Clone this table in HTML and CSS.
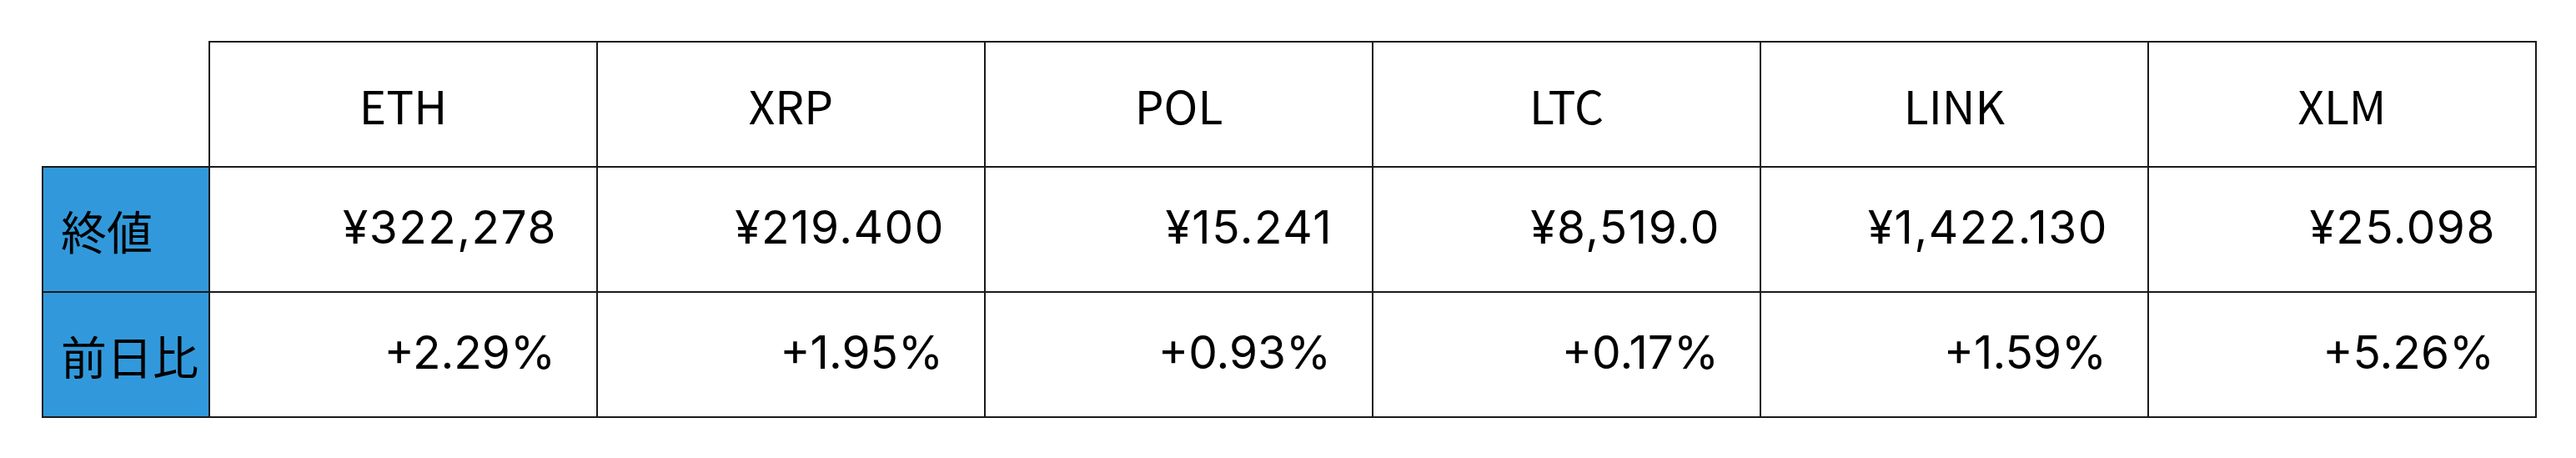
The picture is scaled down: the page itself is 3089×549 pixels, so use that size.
FILE: index.html
```html
<!DOCTYPE html>
<html lang="ja">
<head>
<meta charset="utf-8">
<title>終値</title>
<link rel="stylesheet" href="styles.css">
</head>
<body>
<table class="prices">
  <thead>
    <tr>
      <th class="corner"></th>
      <th class="coin">ETH</th>
      <th class="coin">XRP</th>
      <th class="coin">POL</th>
      <th class="coin">LTC</th>
      <th class="coin">LINK</th>
      <th class="coin">XLM</th>
    </tr>
  </thead>
  <tbody>
    <tr class="close-row">
      <th class="label">終値</th>
      <td class="val">¥322,278</td>
      <td class="val">¥219.400</td>
      <td class="val">¥15.241</td>
      <td class="val">¥8,519.0</td>
      <td class="val">¥1,422.130</td>
      <td class="val">¥25.098</td>
    </tr>
    <tr>
      <th class="label">前日比</th>
      <td class="val">+2.29%</td>
      <td class="val">+1.95%</td>
      <td class="val">+0.93%</td>
      <td class="val">+0.17%</td>
      <td class="val">+1.59%</td>
      <td class="val">+5.26%</td>
    </tr>
  </tbody>
</table>
</body>
</html>
```
FILE: styles.css
```css
html, body {
  margin: 0;
  padding: 0;
  background: #ffffff;
}

body {
  padding: 49px 0 0 50px;
  font-family: "Noto Sans CJK JP", "Noto Sans", sans-serif;
  color: #000000;
}

.prices {
  border-collapse: collapse;
  table-layout: fixed;
  font-size: 55px;
  font-weight: 400;
}

.prices th,
.prices td {
  border: 2px solid #1a1a1a;
  height: 150px;
  padding: 0;
  box-sizing: border-box;
  font-weight: 400;
  line-height: 1;
  vertical-align: middle;
}

.prices .corner {
  width: 200px;
  border-top: none;
  border-left: none;
}

.prices .coin {
  width: 465px;
  text-align: center;
}

.prices .label {
  background: #3199db;
  text-align: left;
  padding-left: 21px;
}

.prices .val {
  font-family: "Inter", "Noto Sans CJK JP", sans-serif;
  text-align: right;
  padding-right: 49px;
  padding-bottom: 6px;
}

.close-row .val {
  letter-spacing: 1.5px;
  padding-right: 47px;
}
```
